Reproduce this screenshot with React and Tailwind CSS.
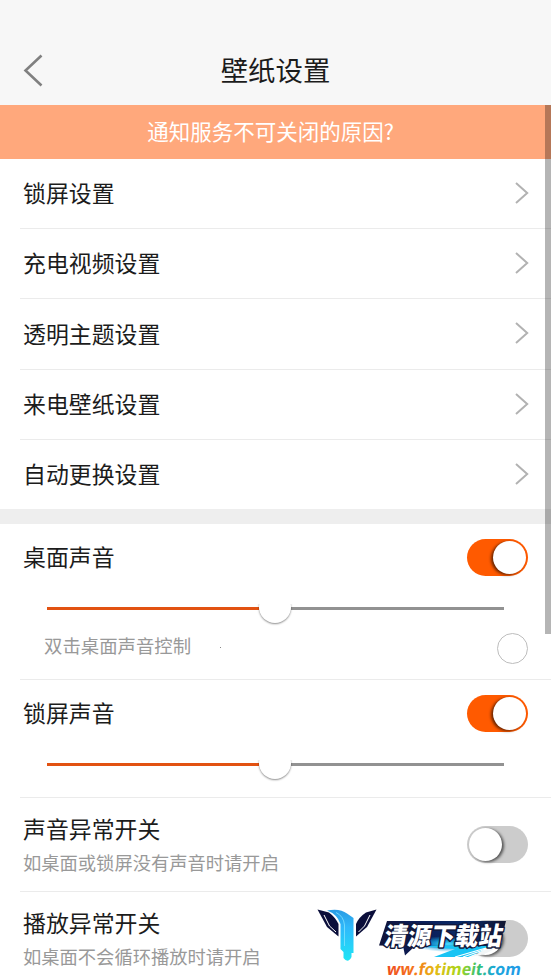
import clsx from "clsx";

const links = [
  { label: "锁屏设置", height: "h-[70px]" },
  { label: "充电视频设置", height: "h-[70px]" },
  { label: "透明主题设置", height: "h-[71px]" },
  { label: "来电壁纸设置", height: "h-[70px]" },
  { label: "自动更换设置", height: "h-[69px]" },
];

function Divider() {
  return <div className="ml-5 h-px shrink-0 bg-[#ebebeb]" />;
}

function Chevron() {
  return (
    <svg className="-mt-0.5" width="16" height="24" viewBox="0 0 16 24" fill="none">
      <path d="M2 2L13.200 12L2 22" stroke="#b2b2b2" strokeWidth="2" />
    </svg>
  );
}

function Switch({ on }) {
  return (
    <div
      className={clsx(
        "flex h-[37px] w-[61px] shrink-0 items-center rounded-full px-0.5",
        on ? "justify-end bg-[#ff5a00]" : "justify-start bg-[#cccccc]"
      )}
    >
      <div
        className={clsx(
          "size-[33px] rounded-full bg-white",
          on
            ? "shadow-[-2px_1px_3px_rgba(0,0,0,0.6)]"
            : "shadow-[2px_1px_3px_rgba(0,0,0,0.6)]"
        )}
      />
    </div>
  );
}

function Slider() {
  return (
    <div className="flex h-8 items-center pr-[47px] pl-[47px]">
      <div className="h-[3px] w-[212px] bg-[#e25212]" />
      <div className="-mt-0.5 size-8 rounded-full bg-white shadow-[0_1px_2px_rgba(0,0,0,0.45)] [clip-path:inset(13px_-4px_-6px_-4px)]" />
      <div className="h-[3px] w-[213px] bg-[#929292]" />
    </div>
  );
}

function SwitchRow({ label, on }) {
  return (
    <div className="flex items-center justify-between pr-[23px] pl-[23px]">
      <span className="-mt-0.5">{label}</span>
      <Switch on={on} />
    </div>
  );
}

function SwitchRowWithHint({ label, hint }) {
  return (
    <div className="flex h-[93px] shrink-0 items-center justify-between pr-[23px] pl-[23px]">
      <div>
        <div className="h-[34px] leading-[34px]">{label}</div>
        <div className="h-[34px] text-[18.3px] leading-[34px] text-[#999999]">
          {hint}
        </div>
      </div>
      <Switch />
    </div>
  );
}

function Watermark() {
  return (
    <svg
      className="absolute top-[900px] left-[310px]"
      width="241"
      height="79"
      viewBox="0 0 241 79"
    >
      <defs>
        <linearGradient id="stream" x1="0" y1="0" x2="0" y2="1">
          <stop offset="0" stopColor="#2a9ce4" />
          <stop offset="0.35" stopColor="#2fb9fb" />
          <stop offset="1" stopColor="#20e5f5" />
        </linearGradient>
        <linearGradient id="plate" x1="0" y1="0" x2="1" y2="0">
          <stop offset="0" stopColor="#10143a" />
          <stop offset="0.3" stopColor="#0b1c57" />
          <stop offset="0.7" stopColor="#0a2c68" />
          <stop offset="1" stopColor="#11152f" />
        </linearGradient>
        <radialGradient id="glow">
          <stop offset="0" stopColor="#4be0ff" />
          <stop offset="0.5" stopColor="#12a0e0" stopOpacity="0.8" />
          <stop offset="1" stopColor="#12a0e0" stopOpacity="0" />
        </radialGradient>
        <linearGradient id="site" x1="0" y1="0" x2="1" y2="0">
          <stop offset="0" stopColor="#ee4b21" />
          <stop offset="0.22" stopColor="#f5791d" />
          <stop offset="0.36" stopColor="#e5bb16" />
          <stop offset="0.54" stopColor="#a9d51b" />
          <stop offset="0.69" stopColor="#35bf78" />
          <stop offset="0.8" stopColor="#1ba7d8" />
          <stop offset="1" stopColor="#2499e8" />
        </linearGradient>
      </defs>

      {/* wings */}
      <path d="M7.500 9.500L19 12.500Q25 17 28.500 24V36.500L17 27Z" fill="#0a0e3a" />
      <path d="M66.500 9.500L56 12.500Q49 17 46 24V36.500L57 27Z" fill="#0a0e3a" />
      <path d="M14 15L19.500 26L26 32" stroke="#fff" strokeWidth="1" fill="none" />
      <path d="M60 15L54.500 26L48.500 32" stroke="#fff" strokeWidth="1" fill="none" />
      <path
        d="M17 10.500Q30 8 37 13.500L43.500 18V53H41.500V57Q38 64 33.500 58V52L30.500 49V24Q27 14 17 10.500Z"
        fill="url(#stream)"
      />
      <path d="M26 12.500Q33.500 16 34.500 25V46" stroke="#7fe2ff" strokeWidth="0.800" fill="none" />

      {/* name plate */}
      <path d="M77 21H196L189 48L104 47L95 55.500L93 46L69 45.500Z" fill="url(#plate)" />
      <ellipse cx="138" cy="44" rx="34" ry="8" fill="url(#glow)" />
      <path d="M110 46H184L158 57H124L145 49Z" fill="#18c4f4" />
      <path d="M189 42Q184 54 160 57Q174 52 180 44Z" fill="#f2f6f7" />
      <path d="M145 57L176 48M153 57L182 47" stroke="#fff" strokeWidth="1.200" />
      <text
        transform="translate(73 44.500) skewX(-10)"
        textLength="118"
        lengthAdjust="spacingAndGlyphs"
        fontFamily="Noto Sans CJK SC, sans-serif"
        fontSize="25"
        fontWeight="900"
        fill="#fff"
        stroke="#11183c"
        strokeWidth="3"
        strokeLinejoin="round"
        paintOrder="stroke"
      >
        清源下载站
      </text>
      <text
        transform="translate(76 75) skewX(-10)"
        textLength="134"
        lengthAdjust="spacingAndGlyphs"
        fontFamily="Open Sans, sans-serif"
        fontSize="16.500"
        fontWeight="700"
        fill="url(#site)"
      >
        ww.fotimeit.com
      </text>
    </svg>
  );
}

export default function App() {
  return (
    <div className="relative flex h-[979px] w-[551px] flex-col overflow-hidden bg-white font-['Noto_Sans_CJK_SC',sans-serif] text-[22.9px] text-[#1c1c1c]">
      <header className="grid h-[105px] shrink-0 grid-cols-[1fr_auto_1fr] items-center bg-[#f7f7f7] pt-[34px]">
        <svg className="ml-[22px]" width="24" height="36" viewBox="0 0 24 36" fill="none">
          <path d="M19.500 3.500L3.500 18.500L19.500 33.500" stroke="#808080" strokeWidth="2.600" />
        </svg>
        <h1 className="text-[27.4px] leading-none">壁纸设置</h1>
      </header>

      <div className="flex h-[54px] shrink-0 items-center justify-center bg-[#ffa87c] pr-2.5 pb-0.5 text-[21.5px] text-white">
        通知服务不可关闭的原因?
      </div>

      {links.map((link, i) => (
        <div key={link.label} className={clsx("flex shrink-0 flex-col", link.height)}>
          <div className="flex grow items-center justify-between pr-[21px] pl-[23px]">
            <span className="-mt-0.5">{link.label}</span>
            <Chevron />
          </div>
          {i < links.length - 1 && <Divider />}
        </div>
      ))}

      <div className="h-[15px] shrink-0 bg-[#eeeeee]" />

      <section className="flex h-[155px] shrink-0 flex-col pt-[15px]">
        <SwitchRow label="桌面声音" on />
        <div className="mt-4">
          <Slider />
        </div>
        <div className="mt-2 flex h-8 items-center pr-[23px] pl-11">
          <span className="-mt-1 text-[18.4px] text-[#999999]">双击桌面声音控制</span>
          <span className="-mt-0.5 ml-[29px] size-px bg-[#888888]" />
          <span className="ml-auto size-[31px] rounded-full border-[1.5px] border-[#bdbdbd]" />
        </div>
      </section>
      <Divider />

      <section className="flex h-[117px] shrink-0 flex-col pt-[15px]">
        <SwitchRow label="锁屏声音" on />
        <div className="mt-4">
          <Slider />
        </div>
      </section>
      <Divider />

      <SwitchRowWithHint label="声音异常开关" hint="如桌面或锁屏没有声音时请开启" />
      <Divider />
      <SwitchRowWithHint label="播放异常开关" hint="如桌面不会循环播放时请开启" />

      {/* scrollbar */}
      <div className="absolute top-[105px] right-0 h-[529px] w-1.5 bg-black/29" />
      <Watermark />
    </div>
  );
}
